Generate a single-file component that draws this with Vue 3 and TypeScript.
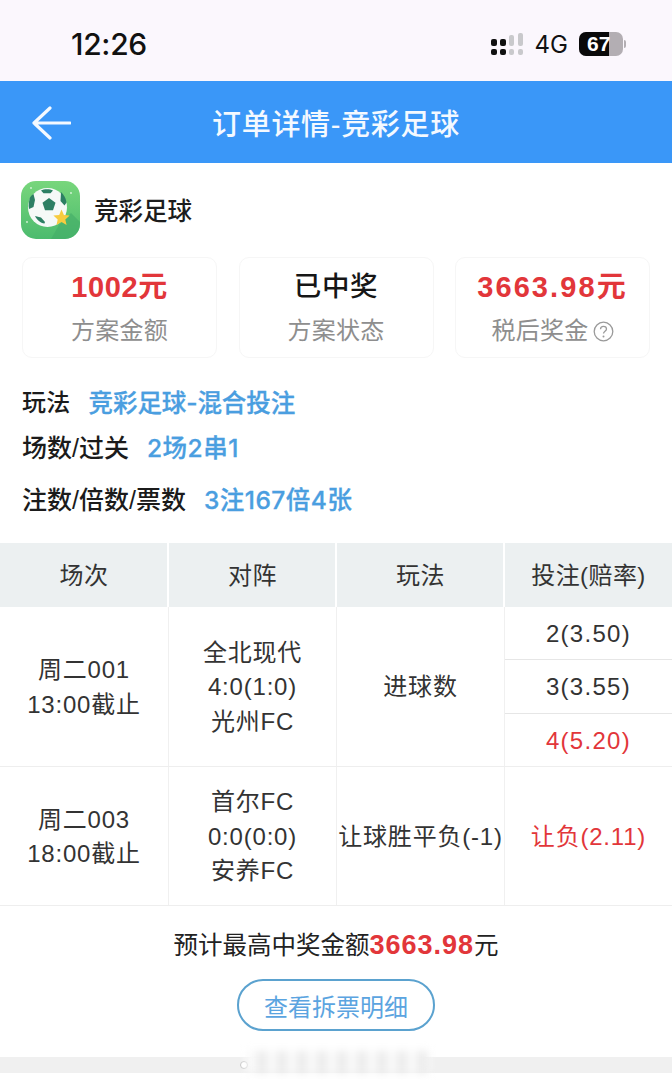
<script setup lang="ts">
const cards = [
  { value: '1002元', label: '方案金额', tone: 'red', help: false },
  { value: '已中奖', label: '方案状态', tone: 'dark', help: false },
  { value: '3663.98元', label: '税后奖金', tone: 'red wide', help: true }
];

const infoRows = [
  { label: '玩法', value: '竞彩足球-混合投注', cls: 'row-a' },
  { label: '场数/过关', value: '2场2串1', cls: 'row-b' },
  { label: '注数/倍数/票数', value: '3注167倍4张', cls: 'row-c' }
];

const heads = ['场次', '对阵', '玩法', '投注(赔率)'];

const matches = [
  {
    no: ['周二001', '13:00截止'],
    teams: ['全北现代', '4:0(1:0)', '光州FC'],
    play: '进球数',
    bets: [
      { text: '2(3.50)', win: false },
      { text: '3(3.55)', win: false },
      { text: '4(5.20)', win: true }
    ]
  },
  {
    no: ['周二003', '18:00截止'],
    teams: ['首尔FC', '0:0(0:0)', '安养FC'],
    play: '让球胜平负(-1)',
    bets: [{ text: '让负(2.11)', win: true }]
  }
];
</script>

<template>
  <div class="page">
    <div class="status">
      <span class="time">12:26</span>
      <div class="status-right">
        <svg class="signal" width="34" height="23" viewBox="0 0 34 23">
          <rect x="1" y="6" width="6" height="7" rx="2" fill="#111" />
          <rect x="1" y="16" width="6" height="6" rx="2" fill="#111" />
          <rect x="10" y="6" width="6" height="7" rx="2" fill="#111" />
          <rect x="10" y="16" width="6" height="6" rx="2" fill="#111" />
          <rect x="19" y="2" width="5" height="11" rx="2" fill="#c9c9cc" />
          <rect x="19" y="16" width="5" height="6" rx="2" fill="#c9c9cc" />
          <rect x="28" y="0" width="5" height="13" rx="2" fill="#c9c9cc" />
          <rect x="28" y="16" width="5" height="6" rx="2" fill="#c9c9cc" />
        </svg>
        <span class="net">4G</span>
        <div class="battery">
          <div class="battery-fill"></div>
          <span class="battery-num">67</span>
        </div>
        <span class="battery-cap"></span>
      </div>
    </div>

    <header class="topbar">
      <svg class="back" width="40" height="34" viewBox="0 0 40 34" fill="none">
        <path d="M19 2 3 17l16 15M3 17h36" stroke="#f4f9ff" stroke-width="3.2" stroke-linecap="round" stroke-linejoin="round" />
      </svg>
      <h1 class="title">订单详情-竞彩足球</h1>
    </header>

    <div class="lottery">
      <svg class="logo" width="59" height="58" viewBox="0 0 59 58">
        <defs>
          <linearGradient id="logoBg" x1="0" y1="0" x2="0" y2="1">
            <stop offset="0" stop-color="#78d67c" />
            <stop offset="1" stop-color="#4cbb6e" />
          </linearGradient>
        </defs>
        <rect width="59" height="58" rx="15" fill="url(#logoBg)" />
        <path d="M38 44 50 32 59 41v2c0 8-7 15-15 15H30z" fill="#43ab68" opacity="0.6" />
        <circle cx="26.500" cy="26.500" r="19.500" fill="#f5f9f7" />
        <path d="M28 17l6.500 4.700-2.500 7.600h-8l-2.500-7.600z" fill="#2c7f63" />
        <path d="M20 9.500c3-1.800 9-1.800 12 0l-2.500 2.800h-7zM9 16.500c1-1.500 2-2.500 3.500-3.500l1.500 6-1.500 7-4.500 2c-.8-4 0-8 1-11.500zM40 11c2.500 2.500 5 6 5.500 10.500l-2 3-4-4.500zM14 35l6 1.500 4 4.500-.5 1.500c-4-.5-7.500-3.500-9.500-7.500z" fill="#2c7f63" />
        <path d="M40.500 28.500l2.400 5.400 5.800.6-4.400 3.900 1.300 5.700-5.100-3-5 3 1.200-5.700-4.300-3.900 5.800-.6z" fill="#f7cc3f" />
        <circle cx="10" cy="7" r="0.900" fill="#d8f5dc" />
        <circle cx="6" cy="41" r="0.900" fill="#d8f5dc" />
        <circle cx="50" cy="12" r="0.900" fill="#d8f5dc" />
      </svg>
      <span class="lottery-name">竞彩足球</span>
    </div>

    <div class="cards">
      <div v-for="card in cards" :key="card.label" class="card">
        <div class="card-value" :class="card.tone">{{ card.value }}</div>
        <div class="card-label">
          {{ card.label }}
          <svg v-if="card.help" class="help" width="21" height="21" viewBox="0 0 21 21" fill="none">
            <circle cx="10.500" cy="10.500" r="9.300" stroke="#9a9a9a" stroke-width="1.300" />
            <path d="M7.500 8.200c0-1.800 1.300-2.900 3-2.900s3 1.100 3 2.700c0 2.300-3 2.300-3 4.600" stroke="#9a9a9a" stroke-width="1.300" />
            <circle cx="10.500" cy="15.400" r="1" fill="#9a9a9a" />
          </svg>
        </div>
      </div>
    </div>

    <div class="info">
      <div v-for="row in infoRows" :key="row.label" class="info-row" :class="row.cls">
        <span class="info-label">{{ row.label }}</span>
        <span class="info-value">{{ row.value }}</span>
      </div>
    </div>

    <div class="table">
      <div class="thead">
        <div v-for="h in heads" :key="h" class="th">{{ h }}</div>
      </div>
      <div v-for="(m, i) in matches" :key="i" class="tr" :class="i === 0 ? 'tr-first' : 'tr-second'">
        <div class="td"><span v-for="t in m.no" :key="t" class="line">{{ t }}</span></div>
        <div class="td"><span v-for="t in m.teams" :key="t" class="line">{{ t }}</span></div>
        <div class="td"><span class="line">{{ m.play }}</span></div>
        <div class="td bets">
          <div v-for="b in m.bets" :key="b.text" class="bet" :class="{ win: b.win }">{{ b.text }}</div>
        </div>
      </div>
    </div>

    <div class="summary">预计最高中奖金额<b class="summary-num">3663.98</b>元</div>
    <div class="action"><button class="detail-btn">查看拆票明细</button></div>

    <div class="band">
      <span class="mark-ring"></span>
      <span class="mark-text"></span>
    </div>
  </div>
</template>

<style>
html, body {
  margin: 0;
  background: #fff;
}
</style>

<style scoped>
.page {
  width: 672px;
  height: 1080px;
  overflow: hidden;
  background: #fff;
  font-family: "Liberation Sans", "Noto Sans CJK SC", sans-serif;
  color: #222;
}

.status {
  height: 81px;
  box-sizing: border-box;
  padding: 7px 46px 0 71px;
  display: flex;
  align-items: center;
  justify-content: space-between;
  background: #fbf7fd;
  color: #111;
}
.time {
  font-family: Inter, "Liberation Sans", sans-serif;
  font-size: 30px;
  font-weight: 500;
  letter-spacing: -0.3px;
}
.status-right {
  display: flex;
  align-items: center;
}
.net {
  font-family: Inter, "Liberation Sans", sans-serif;
  font-size: 24px;
  margin: 0 11px 0 11px;
}
.battery {
  position: relative;
  width: 44px;
  height: 24px;
  border-radius: 7px;
  overflow: hidden;
  background: #b3aeb3;
}
.battery-fill {
  width: 30px;
  height: 100%;
  background: #0a0a0a;
}
.battery-num {
  position: absolute;
  top: 0;
  left: 8px;
  line-height: 24px;
  font-size: 21px;
  font-weight: 700;
  color: #fff;
}
.battery-cap {
  width: 2px;
  height: 8px;
  margin-left: 1px;
  border-radius: 0 2px 2px 0;
  background: #b3aeb3;
}

.topbar {
  position: relative;
  height: 82px;
  display: flex;
  align-items: center;
  justify-content: center;
  background: #3a97f8;
}
.back {
  position: absolute;
  left: 31px;
  top: 25px;
}
.title {
  margin: 0;
  font-size: 29px;
  font-weight: 500;
  color: #f4f9ff;
  letter-spacing: 0.7px;
}

.lottery {
  display: flex;
  align-items: center;
  gap: 14px;
  padding: 18px 0 0 21px;
}
.lottery-name {
  margin-bottom: 2px;
  font-size: 24.500px;
  font-weight: 500;
  color: #1c1c1c;
}

.cards {
  display: flex;
  gap: 21.500px;
  padding: 18px 22px 0;
}
.card {
  width: 195px;
  height: 101px;
  box-sizing: border-box;
  padding-top: 11px;
  border: 1px solid #f6f6f6;
  border-radius: 10px;
  text-align: center;
}
.card-value {
  font-size: 29px;
  line-height: 36px;
  font-weight: 700;
  letter-spacing: 0.6px;
}
.card-value.red {
  color: #e2363a;
}
.card-value.wide {
  letter-spacing: 2.100px;
}
.card-value.dark {
  font-size: 27.500px;
  color: #161616;
  font-weight: 500;
}
.card-label {
  display: flex;
  align-items: center;
  justify-content: center;
  gap: 4px;
  margin-top: 11px;
  font-size: 24px;
  line-height: 30px;
  letter-spacing: 0.3px;
  color: #8e8e8e;
}

.info {
  padding: 0 22px;
}
.info-row {
  display: flex;
  align-items: center;
  gap: 18px;
  font-size: 25px;
  line-height: 34px;
}
.row-a {
  margin-top: 28px;
  font-size: 24px;
  letter-spacing: 0.3px;
}
.row-b {
  margin-top: 11px;
}
.row-c {
  margin-top: 18px;
}
.info-label {
  font-weight: 500;
  color: #1b1b1b;
}
.info-value {
  font-family: Inter, "Noto Sans CJK SC", sans-serif;
  font-size: 24.500px;
  font-weight: 500;
  letter-spacing: 0.500px;
  color: #4a9ee0;
  -webkit-text-stroke: 0.3px #4a9ee0;
}
.row-a .info-value {
  letter-spacing: -0.100px;
}

.table {
  margin-top: 26px;
  border-bottom: 1px solid #eeeeee;
}
.thead,
.tr {
  display: grid;
  grid-template-columns: 168px 168px 168px 168px;
}
.thead {
  height: 64px;
  background: #ecf0f1;
}
.th {
  display: flex;
  align-items: center;
  justify-content: center;
  padding-bottom: 4px;
  font-size: 24px;
  letter-spacing: 0.4px;
  color: #333;
  border-left: 2px solid #fff;
  margin-left: -1px;
}
.th:first-child {
  border-left: 0;
  margin-left: 0;
}
.tr {
  border-bottom: 1px solid #eeeeee;
}
.tr:last-child {
  border-bottom: 0;
}
.tr-first {
  height: 159px;
}
.tr-second {
  height: 138px;
}
.td {
  display: flex;
  flex-direction: column;
  align-items: center;
  justify-content: center;
  padding-top: 2px;
  font-size: 24px;
  line-height: 34.500px;
  color: #333;
  border-left: 1px solid #f0f0f0;
  letter-spacing: 0.8px;
}
.td:first-child {
  border-left: 0;
}
.line {
  white-space: nowrap;
}
.bets {
  align-items: stretch;
  justify-content: stretch;
  padding-top: 0;
  letter-spacing: 1.300px;
}
.tr-second .bets {
  letter-spacing: 0.800px;
}
.bet {
  flex: 1;
  display: flex;
  align-items: center;
  justify-content: center;
  padding-top: 2px;
  border-top: 1px solid #e6e6e6;
}
.bet:first-child {
  border-top: 0;
}
.bet.win {
  color: #e2363a;
}

.summary {
  margin-top: 23px;
  text-align: center;
  font-size: 24.500px;
  line-height: 32px;
  color: #222;
}
.summary-num {
  font-size: 27px;
  letter-spacing: 1px;
  color: #e2363a;
}
.action {
  display: flex;
  justify-content: center;
  margin-top: 17px;
}
.detail-btn {
  width: 198px;
  height: 52px;
  padding: 0;
  border: 2px solid #5ba2cf;
  border-radius: 26px;
  background: #fff;
  font: inherit;
  font-size: 24px;
  color: #5ba4e0;
}
.band {
  position: relative;
  height: 16px;
  margin-top: 26px;
  background: #f0f0f0;
}
.mark-ring {
  position: absolute;
  left: 240px;
  top: 4px;
  width: 6px;
  height: 6px;
  border: 1px solid #c4c4c4;
  border-radius: 50%;
  background: #fff;
}
.mark-text {
  position: absolute;
  left: 246px;
  top: -6px;
  width: 184px;
  height: 22px;
  filter: blur(4px);
  background: repeating-linear-gradient(90deg, #fafafa 0 12px, #e8e8e8 12px 20px);
}
</style>
